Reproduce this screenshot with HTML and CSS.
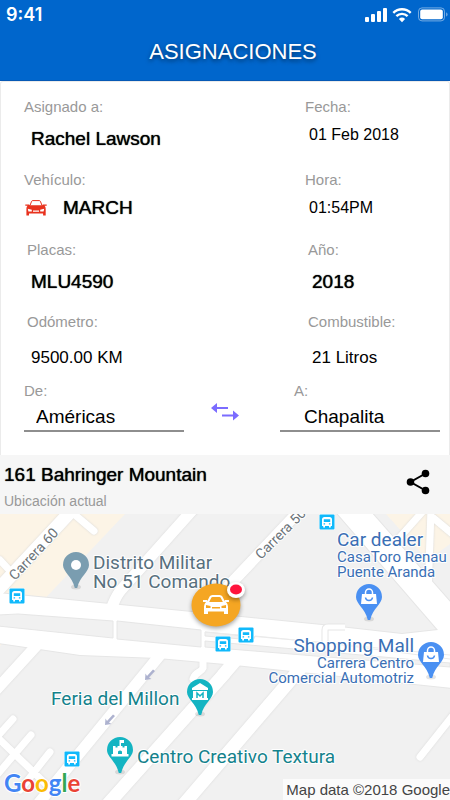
FILE: index.html
```html
<!DOCTYPE html>
<html lang="es">
<head>
    <meta charset="UTF-8">
    <meta name="viewport" content="width=device-width, initial-scale=1.0">
    <title>Asignaciones</title>
    <link rel="stylesheet" href="styles.css">
</head>
<body>
    <header class="header">
        <div class="status-bar">
            <span class="time">9:41</span>
            <svg class="status-icons" width="84" height="16" viewBox="0 0 84 16" aria-hidden="true">
                <g fill="#fff">
                    <rect x="0" y="10" width="4" height="5" rx="1"/>
                    <rect x="6" y="7" width="4" height="8" rx="1"/>
                    <rect x="12" y="4" width="4" height="11" rx="1"/>
                    <rect x="18" y="1" width="4" height="14" rx="1"/>
                    <path d="M37 15.2l3.1-3.3a4.5 4.5 0 0 0-6.2 0z"/>
                </g>
                <g fill="none" stroke="#fff" stroke-width="2.4">
                    <path d="M28.3 5.8a12.5 12.5 0 0 1 17.4 0"/>
                    <path d="M31.4 9.2a8 8 0 0 1 11.2 0"/>
                </g>
                <rect x="53.5" y=".9" width="26" height="13" rx="3.5" fill="none" stroke="#fff" stroke-opacity=".45"/>
                <rect x="55.2" y="2.6" width="22.6" height="9.6" rx="2" fill="#fff"/>
                <path d="M81.2 5.2c1.8.8 1.8 3.6 0 4.4z" fill="#fff" fill-opacity=".5"/>
            </svg>
        </div>
        <h1>ASIGNACIONES</h1>
    </header>

    <main class="content">
        <section class="card">
            <dl class="details">
                <div class="field">
                    <dt>Asignado a:</dt>
                    <dd class="strong">Rachel Lawson</dd>
                </div>
                <div class="field near">
                    <dt>Fecha:</dt>
                    <dd>01 Feb 2018</dd>
                </div>
                <div class="field near">
                    <dt>Vehículo:</dt>
                    <dd class="strong vehicle">
                        <svg width="22" height="16" viewBox="0 0 22 16" aria-hidden="true">
                            <path d="M5 5.5L6.6 1.3Q6.9.6 7.7.6h6.6q.8 0 1.1.7L17 5.5" fill="none" stroke="#e8321e" stroke-width="1"/>
                            <path d="M.3 4.6h3.700l.8.600h12.400l.8-.600h3.700v1.200h-2.200c1 .9 1.200 2 1.200 3.600V15.400h-2.600v-2H4v2H1.400V9.400c0-1.600.200-2.700 1.200-3.600H.3z" fill="#e8321e"/>
                            <path d="M2.800 8.800l4 1v1.700H3.400zM19.200 8.800l-4 1v1.700h3.400zM8 10.600h6v1.200H8z" fill="#fff"/>
                        </svg>
                        MARCH
                    </dd>
                </div>
                <div class="field near">
                    <dt>Hora:</dt>
                    <dd>01:54PM</dd>
                </div>
                <div class="field indent">
                    <dt>Placas:</dt>
                    <dd class="strong">MLU4590</dd>
                </div>
                <div class="field indent">
                    <dt>Año:</dt>
                    <dd class="strong">2018</dd>
                </div>
                <div class="field indent far">
                    <dt>Odómetro:</dt>
                    <dd class="amount">9500.00 KM</dd>
                </div>
                <div class="field indent far">
                    <dt>Combustible:</dt>
                    <dd class="amount">21 Litros</dd>
                </div>
            </dl>

            <form class="route">
                <div class="place">
                    <label for="origin">De:</label>
                    <input type="text" id="origin" value="Américas">
                </div>
                <button type="button" class="swap" aria-label="Intercambiar">
                    <svg width="28" height="18" viewBox="0 0 28 18">
                        <path d="M0 5l6-5v4h11v2H6v4zM28 12.500L22 7.500v4H11v2h11v4z" fill="#7b6cff"/>
                    </svg>
                </button>
                <div class="place destination">
                    <label for="destination">A:</label>
                    <input type="text" id="destination" value="Chapalita">
                </div>
            </form>
        </section>

        <section class="location">
            <div class="location-text">
                <h2>161 Bahringer Mountain</h2>
                <p>Ubicación actual</p>
            </div>
            <button type="button" class="share" aria-label="Compartir">
                <svg width="24" height="26" viewBox="0 0 24 26">
                    <path d="M19.500 4.500L4.500 13l15 8.500" fill="none" stroke="#000" stroke-width="2"/>
                    <circle cx="19.500" cy="4.500" r="3.800"/>
                    <circle cx="4.500" cy="13" r="3.800"/>
                    <circle cx="19.500" cy="21.500" r="3.800"/>
                </svg>
            </button>
        </section>

        <section class="map">
            <svg viewBox="0 0 450 286" preserveAspectRatio="xMinYMin slice">
                <defs>
                    <g id="streets">
                        <path class="wide" d="M-6 80L74-6M225 159L108 290M300 155L184 290M235 147l-12 14"/>
                        <path class="medium" d="M110 97c4-8 5-14 11-21L196-8M221 80L304-8M38 130L-5 177M160 141L38 290"/>
                        <path class="narrow" d="M74 0l20 17M0 46l12 13M203 146v8c-2 5-8 4-10 11M13 205L-4 224M31 221L-4 262M50 238L20 276M-4 222L52 276M454 200L420 243"/>
                        <path class="narrow" d="M424 -4L385 40M431 -4L428 80M431 2l24 20"/>
                    </g>
                    <g id="avenues">
                        <path d="M-2 79L192 98l130 13 80 9 36-4L336-2h35L452 90v84L235 151l-10-1-67-6-78-3-82-12z"/>
                    </g>
                    <g id="bus">
                        <rect x="-8" y="-8" width="16" height="16" rx="1.500" fill="#fff"/>
                        <rect x="-7.500" y="-7.500" width="15" height="15" rx="1" fill="#10b9fb"/>
                        <path d="M-5-2.500q0-2.500 2.500-2.500h5Q5-5 5-2.500V4H3.800v1.500H2V4h-4v1.500h-1.800V4H-5z" fill="#fff"/>
                        <path d="M-3.200-2.800h6.400v2.700h-6.400zM-3.400 1.300h1.500v1.200h-1.500zM1.900 1.300h1.500v1.200H1.900z" fill="#10b9fb"/>
                    </g>
                    <g id="pin">
                        <ellipse cx="0" cy="22" rx="5" ry="2.500" fill="#000" fill-opacity=".1"/>
                        <path d="M0-13a13 13 0 0 1 13 13C13 7 4 11 1.200 23h-2.400C-4 11-13 7-13 0A13 13 0 0 1 0-13z"/>
                    </g>
                    <g id="bag">
                        <path d="M-7-3H7L8 7H-8z" fill="#fff"/>
                        <path d="M-3.500-3v-1.500a3.500 3.500 0 0 1 7 0V-3" fill="none" stroke="#fff" stroke-width="1.500"/>
                        <path d="M-3.500.500c.5 4 6.500 4 7 0" fill="none" stroke="#4a90f2" stroke-width="1.500"/>
                    </g>
                    <path id="oneway" d="M4-5.500L-2 1-3.500-1.500-4 5 2.500 4 0 2.500 6-4z" fill="#adb2cf"/>
                </defs>

                <rect width="450" height="286" fill="#f1f1f1"/>
                <path d="M0 0h125L0 132zM386 0h64v30l-22 16-24-26z" fill="#fcf4e6"/>
                <use href="#streets" class="street-edge"/>
                <use href="#avenues" class="avenue-edge"/>
                <use href="#streets" class="street"/>
                <use href="#avenues" class="avenue"/>

                <!-- blocks between the lanes -->
                <g fill="#f1f1f1" stroke="#e6e6e6">
                    <path d="M-2 101l20-1 95 7v17L-2 112zM117 107l84 9v17l-84-8z"/>
                    <path d="M205 118l50 5-2 3-48-4zM205 127l245 22v4l-245-20z"/>
                </g>
                <path d="M205 118l122 11 123 16M255 122l195 19" class="lane"/>
                <path d="M325 131v-15q0-3 3-3h17" class="ramp-edge"/>
                <path d="M325 131v-15q0-3 3-3h17" class="ramp"/>

                <use href="#oneway" x="149" y="161"/>
                <use href="#oneway" x="109" y="206"/>

                <g class="street-name">
                    <text transform="translate(15 67) rotate(-47)">Carrera 60</text>
                    <text transform="translate(261 46) rotate(-45)">Carrera 50</text>
                </g>

                <use href="#bus" x="17" y="82"/>
                <use href="#bus" x="327" y="8"/>
                <use href="#bus" x="246" y="121"/>
                <use href="#bus" x="223" y="130"/>
                <use href="#bus" x="72" y="245"/>

                <use href="#pin" x="76" y="51" fill="#7a9db0"/>
                <circle cx="76" cy="51" r="5" fill="#fff"/>
                <use href="#pin" x="369" y="83" fill="#4a90f2"/>
                <use href="#bag" x="369" y="83"/>
                <use href="#pin" x="431" y="141" fill="#4a90f2"/>
                <use href="#bag" x="431" y="141"/>
                <use href="#pin" x="200" y="178" fill="#14b4c2"/>
                <path d="M200 169l8 5v2h-16v-2zM193 177h14v7h1v2h-16v-2h1z" fill="#fff"/>
                <path d="M197 184v-5l3 3 3-3v5" fill="none" stroke="#14b4c2" stroke-width="1.500"/>
                <use href="#pin" x="120" y="236" fill="#14b4c2"/>
                <path d="M119.500 226h4.500v3h-3v3h1.500v1.500h2V232h2.500v8h1.500v2.500h-17V240h1.500v-8h2.500v1.500h2V232h2z" fill="#fff"/>
                <path d="M118 240v-2.500q2-2 4 0v2.500z" fill="#14b4c2"/>

                <g class="place-name">
                    <g class="military">
                        <text x="93" y="55">Distrito Militar</text>
                        <text x="93" y="74">No 51 Comando</text>
                    </g>
                    <g class="shop">
                        <text x="337" y="32">Car dealer</text>
                        <text x="337" y="48" class="sub">CasaToro Renau</text>
                        <text x="337" y="63" class="sub">Puente Aranda</text>
                        <text x="414" y="138" text-anchor="end">Shopping Mall</text>
                        <text x="414" y="154" text-anchor="end" class="sub">Carrera Centro</text>
                        <text x="414" y="169" text-anchor="end" class="sub">Comercial Automotriz</text>
                    </g>
                    <g class="culture">
                        <text x="51" y="191">Feria del Millon</text>
                        <text x="137" y="249">Centro Creativo Textura</text>
                    </g>
                </g>

                <!-- vehicle marker -->
                <g>
                    <ellipse cx="216" cy="91" rx="24.500" ry="21.500" fill="#f5a623" class="marker"/>
                    <path d="M207.500 89l3-6q.5-1 2-1h7q1.500 0 2 1l3 6" fill="none" stroke="#fff" stroke-width="2"/>
                    <path d="M203 86h4l1 2h16l1-2h4v2h-3q2 2 2 4.500v7.500h-4v-2.500h-16v2.500h-4v-7.500q0-2.500 2-4.500h-3z" fill="#fff"/>
                    <path d="M206 91l4.500 1v2H206zM226 91l-4.500 1v2h4.500zM212 93h8v1.500h-8z" fill="#f5a623"/>
                    <ellipse cx="236" cy="76" rx="9" ry="8" fill="#fff" class="marker"/>
                    <ellipse cx="236" cy="75.500" rx="6" ry="5" fill="#ff143c"/>
                </g>

                <text x="4" y="278" class="google"><tspan fill="#4285f4">G</tspan><tspan fill="#ea4335">o</tspan><tspan fill="#fbbc05">o</tspan><tspan fill="#4285f4">g</tspan><tspan fill="#34a853">l</tspan><tspan fill="#ea4335">e</tspan></text>
            </svg>
            <small class="map-credit">Map data ©2018 Google</small>
        </section>
    </main>
</body>
</html>
```
FILE: styles.css
```css
* {
    box-sizing: border-box;
}
body {
    margin: 0;
    min-height: 100vh;
    display: flex;
    flex-direction: column;
    font-family: "Liberation Sans", Arial, sans-serif;
    background-color: #fff;
    color: #000;
}
.header {
    background-color: #0066cc;
    color: #fff;
    padding-bottom: 14px;
    border-bottom: 1px solid #0759b5;
}
.status-bar {
    display: flex;
    justify-content: space-between;
    align-items: center;
    height: 30px;
    padding: 0 1px 0 6px;
}
.time {
    font-family: Inter, sans-serif;
    font-size: 18px;
    font-weight: 600;
    line-height: 28px;
}
h1 {
    margin: 0;
    padding: 8px 0 0 16px;
    font-size: 22px;
    font-weight: normal;
    line-height: 28px;
    text-align: center;
    text-shadow: 0 2px 4px rgba(0,0,0,0.5);
}
.content {
    flex: 1;
    display: flex;
    flex-direction: column;
}
.card {
    padding: 17px 9px 23px 23px;
    border: 1px solid #ebebeb;
    border-bottom: none;
    border-radius: 3px 3px 0 0;
}
.details {
    display: grid;
    grid-template-columns: 281fr 135fr;
    grid-template-rows: 73px 70px 72px 69px;
    margin: 0;
}
.field {
    display: flex;
    flex-direction: column;
    gap: 12px;
}
.near {
    gap: 8px;
}
.far {
    gap: 16px;
}
.indent {
    padding-left: 3px;
}
dt,
label,
.location p {
    font-size: 15px;
    line-height: 16px;
    color: #999;
}
dd {
    margin: 0;
    padding-left: 4px;
    font-size: 16px;
    line-height: 24px;
}
.near dd.vehicle {
    display: flex;
    align-items: center;
    gap: 16px;
    padding-left: 1px;
}
.field:not(.near) dd {
    padding-left: 7px;
}
.indent:not(.near) dd {
    padding-left: 4px;
}
.amount {
    font-size: 17px;
}
.strong,
h2 {
    font-size: 19px;
    text-shadow: 0 0 1px #000;
}
.route {
    display: grid;
    grid-template-columns: 160fr 96fr 160fr;
}
.place {
    display: flex;
    flex-direction: column;
    gap: 4px;
}
.destination label {
    padding-left: 14px;
}
.place input {
    width: 100%;
    height: 29px;
    padding: 0 12px;
    border: none;
    border-bottom: 2px solid #8e8e8e;
    background: none;
    font-family: inherit;
    font-size: 19px;
    color: #000;
}
.destination input {
    padding: 0 24px;
}
button {
    padding: 0;
    border: none;
    background: none;
    cursor: pointer;
}
.swap {
    justify-self: start;
    align-self: center;
    padding: 8px 0 0 27px;
}
.location {
    display: flex;
    justify-content: space-between;
    align-items: center;
    height: 59px;
    padding: 2px 20px 0 4px;
    background-color: #f6f6f6;
}
h2 {
    margin: 0;
    font-weight: normal;
    line-height: 24px;
}
.location p {
    margin: 6px 0 0;
    font-size: 14px;
}
.share {
    padding-bottom: 8px;
}
.share svg,
.swap svg {
    display: block;
}
.map {
    position: relative;
    flex: 1;
    min-height: 286px;
    overflow: hidden;
}
.map svg {
    position: absolute;
    width: 100%;
    height: 100%;
    font-family: Roboto, sans-serif;
}
.map-credit {
    position: absolute;
    right: 0;
    bottom: 0;
    padding-left: 3px;
    background-color: rgba(255,255,255,0.7);
    font-size: 15px;
    line-height: 21px;
    color: #444;
    white-space: nowrap;
}
.street {
    fill: none;
    stroke: #fff;
    stroke-linecap: round;
}
.street-edge {
    fill: none;
    stroke: #ececec;
    stroke-linecap: round;
    filter: drop-shadow(0 0 1px #d8d8d8);
}
.wide {
    stroke-width: 13px;
}
.medium {
    stroke-width: 11px;
}
.narrow {
    stroke-width: 7px;
}
.avenue {
    fill: #fff;
}
.avenue-edge {
    fill: #fff;
    stroke: #e6e6e6;
    stroke-width: 2px;
}
.lane {
    fill: none;
    stroke: #ebebeb;
}
.ramp-edge {
    fill: none;
    stroke: #e6e6e6;
    stroke-width: 7px;
}
.ramp {
    fill: none;
    stroke: #fff;
    stroke-width: 5px;
}
.street-name {
    font-size: 14px;
    fill: #6b7378;
}
.place-name text,
.street-name text {
    paint-order: stroke;
    stroke: #fff;
    stroke-width: 2px;
    stroke-linejoin: round;
}
.place-name {
    font-size: 19px;
}
.place-name .sub {
    font-size: 15px;
}
.military {
    fill: #58707e;
}
.shop {
    fill: #3a6fb5;
}
.culture {
    fill: #14828c;
}
.marker {
    filter: drop-shadow(0 2px 2px rgba(0,0,0,0.35));
}
.google {
    font-family: Lato, sans-serif;
    font-size: 24px;
    font-weight: bold;
    paint-order: stroke;
    stroke: #fff;
    stroke-width: 2px;
}
```
